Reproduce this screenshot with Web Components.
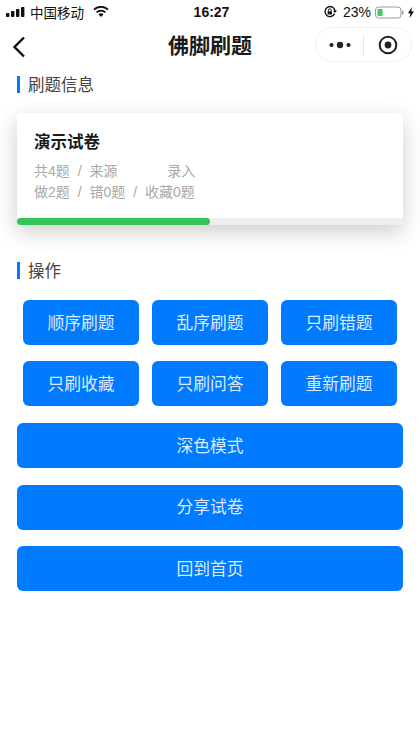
<!DOCTYPE html>
<html lang="zh">
<head>
<meta charset="utf-8">
<title>佛脚刷题</title>
<style>
  html, body { margin: 0; padding: 0; background: #fff; }
  body { font-family: "Liberation Sans", "Noto Sans CJK SC", sans-serif; width: 420px; height: 747px; overflow: hidden; }
</style>
</head>
<body>
<phone-status></phone-status>
<nav-bar>佛脚刷题</nav-bar>
<section-title style="margin-top:4px">刷题信息</section-title>
<exam-card title="演示试卷" line1="共4题 / 来源 &#8195;&#8195;&#8195;录入" line2="做2题 / 错0题 / 收藏0题" percent="50"></exam-card>
<section-title style="margin-top:33px">操作</section-title>
<action-grid>
  <action-button>顺序刷题</action-button>
  <action-button>乱序刷题</action-button>
  <action-button>只刷错题</action-button>
  <action-button>只刷收藏</action-button>
  <action-button>只刷问答</action-button>
  <action-button>重新刷题</action-button>
</action-grid>
<action-list>
  <action-button>深色模式</action-button>
  <action-button>分享试卷</action-button>
  <action-button>回到首页</action-button>
</action-list>
<script>
window.customElements.define('phone-status', class extends HTMLElement {
  constructor() {
    super()
    this.attachShadow({ mode: 'open' }).innerHTML = `
      <style>
        :host { display: grid; grid-template-columns: 1fr auto 1fr; align-items: center; height: 24px; padding: 0 6px; color: #111; font-size: 14px; box-sizing: border-box; }
        .l, .r { display: flex; align-items: center; }
        .l { gap: 5px; }
        .r { justify-content: flex-end; }
        .t { font-weight: 700; font-size: 14px; padding-left: 3px; }
        .c { font-size: 13.5px; }
      </style>
      <div class="l">
        <svg width="19" height="12" viewBox="0 0 19 12"><g fill="#111"><rect x="0" y="7" width="3.4" height="4" rx=".8"/><rect x="5" y="5" width="3.4" height="6" rx=".8"/><rect x="10" y="3" width="3.4" height="8" rx=".8"/><rect x="15" y="1" width="3.4" height="10" rx=".8"/></g></svg>
        <span class="c">中国移动</span>
        <svg style="margin-left:4px" width="16" height="12" viewBox="0 0 16 12"><path d="M8 11 5.6 8.4a3.4 3.4 0 0 1 4.8 0Z" fill="#111"/><path d="M3.6 6.4a6.2 6.2 0 0 1 8.8 0M1 3.6a10 10 0 0 1 14 0" fill="none" stroke="#111" stroke-width="1.8"/></svg>
      </div>
      <div class="t">16:27</div>
      <div class="r">
        <svg width="14" height="14" viewBox="0 0 14 14" style="margin-right:6px"><path d="M11.6 8.6A5 5 0 1 1 12 6" fill="none" stroke="#111" stroke-width="1.4"/><path d="M10 5.4h4L12 8Z" fill="#111"/><rect x="4.6" y="6.2" width="4.4" height="3.4" rx=".5" fill="#111"/><path d="M5.4 6.2V5.2a1.4 1.4 0 0 1 2.8 0v1" fill="none" stroke="#111"/></svg>
        <span>23%</span>
        <svg style="margin-left:4px" width="29" height="13" viewBox="0 0 29 13"><rect x=".5" y="1" width="25.5" height="11" rx="3" fill="#fff" stroke="#999"/><rect x="2.5" y="3" width="5" height="7" fill="#3ccf5a"/><rect x="27" y="4.6" width="1.4" height="4" rx=".7" fill="#999"/></svg>
        <svg style="margin-left:4px" width="6" height="11" viewBox="0 0 6 11"><path d="M3.8 0 0 6.2h2.3L1.6 11 6 4.6H3.4Z" fill="#111"/></svg>
      </div>`
  }
})

window.customElements.define('nav-bar', class extends HTMLElement {
  constructor() {
    super()
    this.attachShadow({ mode: 'open' }).innerHTML = `
      <style>
        :host { display: block; position: relative; height: 44px; box-sizing: border-box; }
        .row { display: flex; align-items: center; justify-content: center; height: 100%; padding-bottom: 4px; box-sizing: border-box; }
        .title { font-size: 21px; font-weight: 700; color: #1a1a1a; }
        .back { position: absolute; left: 12px; top: 12px; }
        .capsule { position: absolute; right: 8px; top: 3px; width: 97px; height: 35px; border: 1px solid #f0f0f0; border-radius: 18px; box-sizing: border-box; display: flex; align-items: center; background: #fff; }
        .capsule > div { flex: 1; display: flex; justify-content: center; align-items: center; height: 100%; }
        .sep { width: 1px; height: 20px; background: #e6e6e6; }
      </style>
      <svg class="back" width="14" height="22" viewBox="0 0 14 22"><path d="M12 1.5 2.5 11l9.5 9.5" fill="none" stroke="#111" stroke-width="2.4"/></svg>
      <div class="row"><span class="title"><slot></slot></span></div>
      <div class="capsule">
        <div><svg width="22" height="8" viewBox="0 0 22 8"><circle cx="2.5" cy="4" r="2.1" fill="#222"/><circle cx="11" cy="4" r="3.2" fill="#222"/><circle cx="19.5" cy="4" r="2.1" fill="#222"/></svg></div>
        <span class="sep"></span>
        <div><svg width="20" height="20" viewBox="0 0 20 20"><circle cx="10" cy="10" r="8.3" fill="none" stroke="#222" stroke-width="2"/><circle cx="10" cy="10" r="3.4" fill="#222"/></svg></div>
      </div>`
  }
})

window.customElements.define('section-title', class extends HTMLElement {
  constructor() {
    super()
    this.attachShadow({ mode: 'open' }).innerHTML = `
      <style>
        :host { display: flex; align-items: center; gap: 8px; height: 24px; padding-left: 17px; font-size: 16.5px; color: #444; }
        i { display: block; width: 3px; height: 17px; background: #007aff; }
      </style>
      <i></i><span><slot></slot></span>`
  }
})

window.customElements.define('exam-card', class extends HTMLElement {
  constructor() {
    super()
    const a = (n) => this.getAttribute(n)
    this.attachShadow({ mode: 'open' }).innerHTML = `
      <style>
        :host { display: block; margin: 17px 17px 0; background: #fff; border-radius: 4px; box-shadow: 0 7px 22px rgba(0,0,0,.2); }
        .body { padding: 19px 17px 15px; }
        .name { font-size: 16.5px; font-weight: 700; color: #1a1a1a; line-height: 20px; margin-bottom: 9px; }
        .meta { font-size: 14px; color: #a8a8a8; line-height: 21px; word-spacing: 4px; }
        .track { height: 7px; background: #eeeeee; border-radius: 0 0 4px 4px; }
        .bar { height: 100%; background: #34c659; border-radius: 4px; }
      </style>
      <div class="body">
        <div class="name">${a('title')}</div>
        <div class="meta">${a('line1')}</div>
        <div class="meta">${a('line2')}</div>
      </div>
      <div class="track"><div class="bar" style="width:${a('percent')}%"></div></div>`
  }
})

window.customElements.define('action-grid', class extends HTMLElement {
  constructor() {
    super()
    this.attachShadow({ mode: 'open' }).innerHTML = `
      <style>
        :host { display: grid; grid-template-columns: repeat(3, 116px); column-gap: 13px; row-gap: 16px; padding: 18px 23px 0; }
      </style>
      <slot></slot>`
  }
})

window.customElements.define('action-list', class extends HTMLElement {
  constructor() {
    super()
    this.attachShadow({ mode: 'open' }).innerHTML = `
      <style>
        :host { display: flex; flex-direction: column; gap: 16.5px; padding: 17px 17px 0; }
      </style>
      <slot></slot>`
  }
})

window.customElements.define('action-button', class extends HTMLElement {
  constructor() {
    super()
    this.attachShadow({ mode: 'open' }).innerHTML = `
      <style>
        :host { display: flex; align-items: center; justify-content: center; height: 45px; padding-bottom: 2px; box-sizing: border-box; background: #007aff; color: #dcebff; font-size: 16.8px; border-radius: 6px; }
      </style>
      <slot></slot>`
  }
})
</script>
</body>
</html>
